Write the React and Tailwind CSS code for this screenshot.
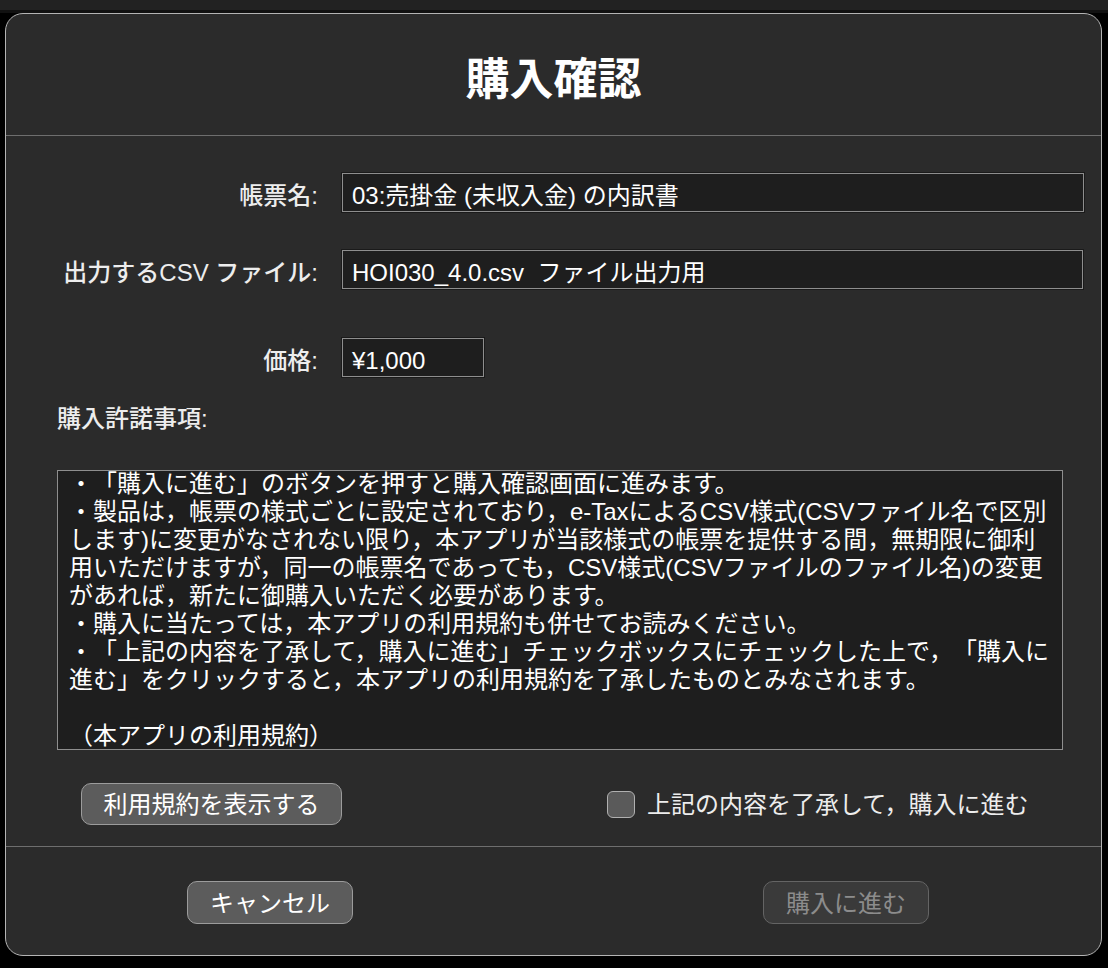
import React, { useState } from 'react';

const terms = [
  '・「購入に進む」のボタンを押すと購入確認画面に進みます。',
  '・製品は，帳票の様式ごとに設定されており，e-TaxによるCSV様式(CSVファイル名で区別',
  'します)に変更がなされない限り，本アプリが当該様式の帳票を提供する間，無期限に御利',
  '用いただけますが，同一の帳票名であっても，CSV様式(CSVファイルのファイル名)の変更',
  'があれば，新たに御購入いただく必要があります。',
  '・購入に当たっては，本アプリの利用規約も併せてお読みください。',
  '・「上記の内容を了承して，購入に進む」チェックボックスにチェックした上で，「購入に',
  '進む」をクリックすると，本アプリの利用規約を了承したものとみなされます。',
  ' ',
  '（本アプリの利用規約）',
];

const FieldRow = ({ label, value, width, className }) => (
  <div className={`flex items-center h-[39px] ${className}`}>
    <div className="w-[261px] text-right pt-[6px] leading-[24px] shrink-0 font-medium">{label}</div>
    <div
      className={`ml-[24px] h-[39px] ${width} bg-[#1e1e1e] border border-[#8e8e8e] shadow-[0_0_0_1px_#1a1a1a] pl-[9px] flex items-center pt-[6px] text-white whitespace-pre`}
    >
      <span>{value}</span>
    </div>
  </div>
);

const App = () => {
  const [agreed, setAgreed] = useState(false);

  return (
    <div className="w-[1108px] h-[968px] bg-black overflow-hidden font-['Liberation_Sans','Noto_Sans_CJK_JP',sans-serif] text-[24px] text-[#ededed] [text-spacing-trim:space-all]">
      {/* background window strip */}
      <div className="h-[13px] bg-[#222222] border-b-[3px] border-[#111111]" />

      <div className="ml-[5px] w-[1097px] bg-[#2b2b2b] border border-[#b4b4b4] rounded-[18px] overflow-hidden">
        {/* header */}
        <div className="h-[121px] flex items-center justify-center pt-[10px]">
          <h1 className="text-[44px] font-bold text-white leading-none">購入確認</h1>
        </div>
        <div className="h-[1px] bg-[#6e6e6e]" />

        {/* body */}
        <div className="pl-[51px]">
          <FieldRow className="mt-[37px]" label="帳票名:" value="03:売掛金 (未収入金) の内訳書" width="w-[742px]" />
          <FieldRow
            className="mt-[38px]"
            label="出力するCSV ファイル:"
            value="HOI030_4.0.csv  ファイル出力用"
            width="w-[741px]"
          />
          <FieldRow className="mt-[49px]" label="価格:" value="¥1,000" width="w-[142px]" />

          <div className="mt-[27px] h-[30px] leading-[30px] font-medium">購入許諾事項:</div>

          <div className="mt-[36px] w-[1006px] h-[280px] bg-[#1e1e1e] border border-[#8e8e8e] overflow-hidden pl-[11px]">
            <div className="-mt-[1px] text-white leading-[28px]">
              {terms.map((line, i) => (
                <div key={i} className="whitespace-pre">{line}</div>
              ))}
            </div>
          </div>
        </div>

        {/* options row */}
        <div className="mt-[33px] h-[42px] flex items-center pl-[75px]">
          <button className="w-[261px] h-[42px] rounded-[10px] bg-[#5c5c5c] border border-[#9c9c9c] text-white text-[24px] leading-none pt-[2px]">
            利用規約を表示する
          </button>
          <label className="ml-[265px] flex items-center cursor-pointer leading-[24px]">
            <span
              onClick={() => setAgreed(!agreed)}
              className="w-[28px] h-[27px] rounded-[6px] bg-[#5a5a5a] border border-[#b0b0b0] flex items-center justify-center text-white text-[18px]"
            >
              {agreed ? '✓' : ''}
            </span>
            <span className="ml-[12px] pt-[2px]">上記の内容を了承して，購入に進む</span>
          </label>
        </div>

        <div className="mt-[21px] h-[1px] bg-[#6e6e6e]" />

        {/* footer */}
        <div className="pt-[34px] pb-[31px] flex pl-[181px]">
          <button className="w-[166px] h-[43px] rounded-[10px] bg-[#5c5c5c] border border-[#9c9c9c] text-white text-[24px] leading-none pt-[2px]">
            キャンセル
          </button>
          <button
            disabled={!agreed}
            className="ml-[410px] w-[166px] h-[43px] rounded-[10px] bg-[#3a3a3a] border border-[#646464] text-[#8c8c8c] text-[24px] leading-none pt-[2px]"
          >
            購入に進む
          </button>
        </div>
      </div>
    </div>
  );
};

export default App;
